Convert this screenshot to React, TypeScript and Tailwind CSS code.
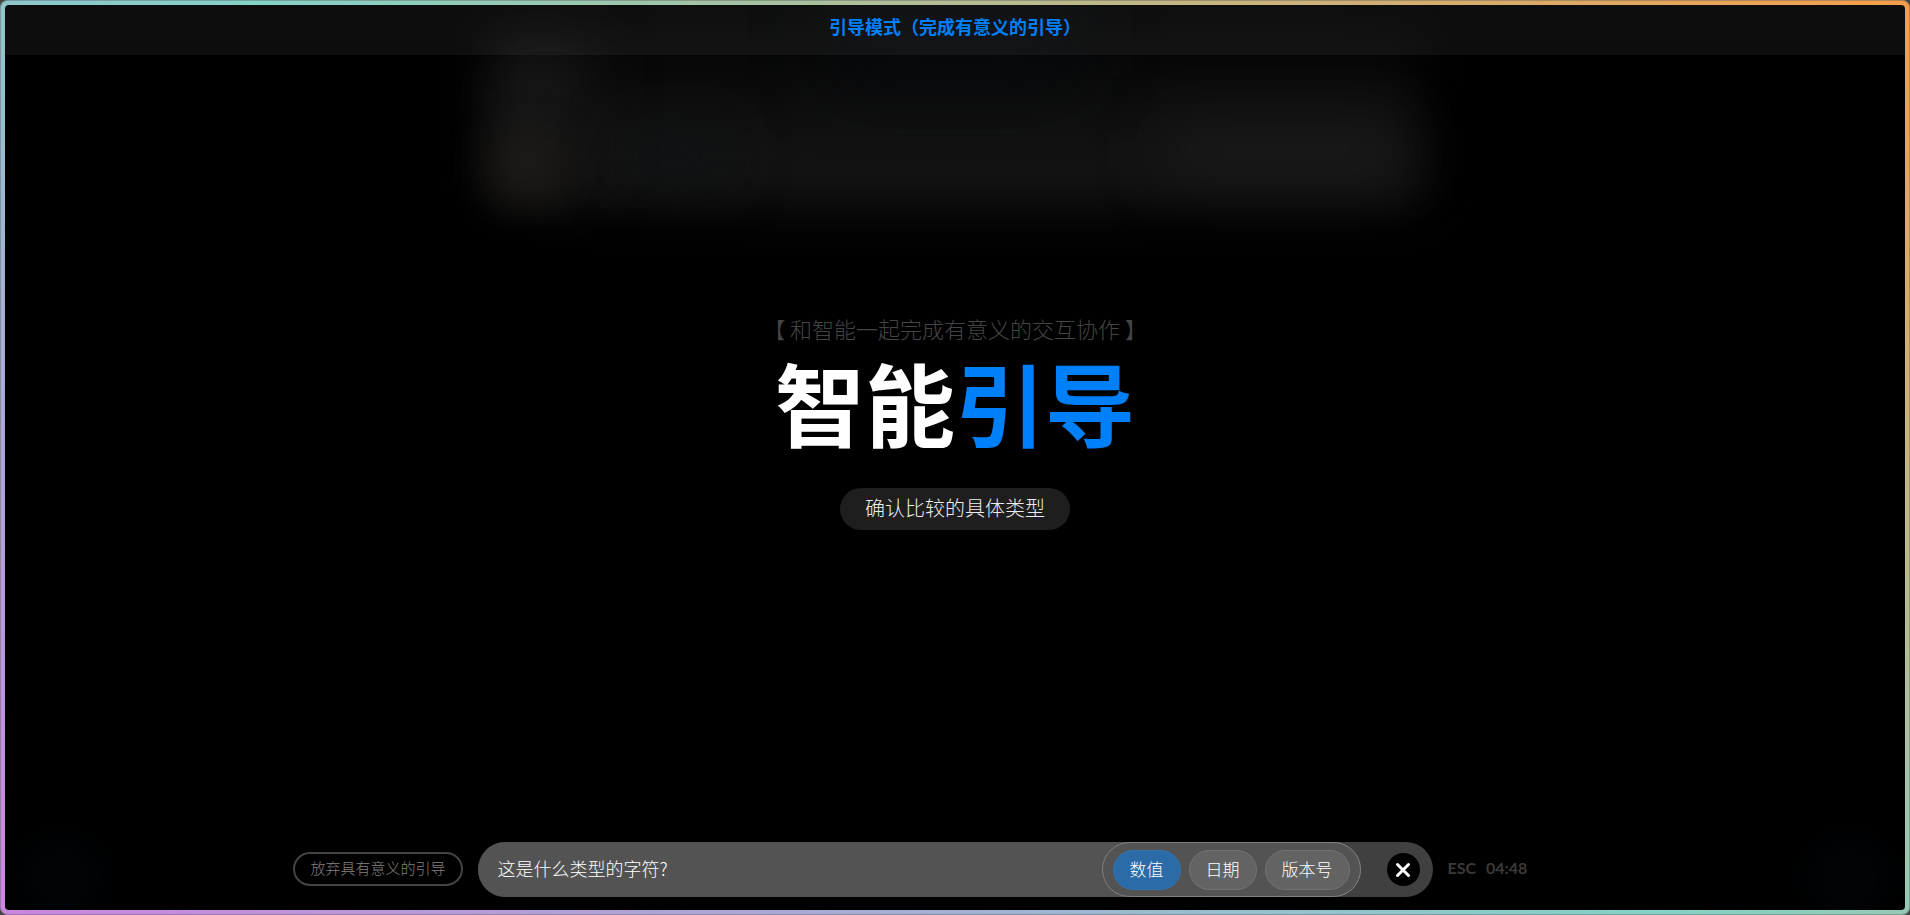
import type { ReactNode } from "react";

const options = ["数值", "日期", "版本号"];

function Glow({ children }: { children: ReactNode }) {
  return (
    <div aria-hidden="true" className="pointer-events-none absolute inset-0 overflow-hidden">
      {children}
    </div>
  );
}

export default function App() {
  return (
    <div className="h-screen bg-[#444] font-['Noto_Sans_CJK_SC',sans-serif]">
      <div className="h-full rounded-lg bg-[linear-gradient(33deg,#cc85e0_0%,#84d2c8_50%,#f59e4b_100%)] p-[5px] shadow-[inset_0_0_0_1px_rgba(90,90,90,0.4)]">
        <div className="relative flex h-full flex-col overflow-hidden rounded-[4px] bg-black">
          <Glow>
            <div className="absolute -top-5 left-1/2 h-[220px] w-[930px] -translate-x-1/2 bg-[linear-gradient(180deg,#000_10%,#0b0b0b_45%,#151515_85%)] blur-[26px]" />
            <div className="absolute top-10 left-[495px] h-[140px] w-[90px] bg-[linear-gradient(90deg,#1c1c1c,#121212)] blur-[30px]" />
            <div className="absolute top-[145px] left-[495px] h-[36px] w-[50px] bg-[#262118] blur-[24px]" />
            <div className="absolute top-[130px] left-[620px] h-[40px] w-[100px] bg-[#0f1214] blur-[30px]" />
            <div className="absolute top-[120px] left-[1160px] h-[50px] w-[240px] bg-[#1a1a1a] blur-[30px]" />
            <div className="absolute -top-2 left-1/2 h-[80px] w-[240px] -translate-x-1/2 bg-[#070a0d] blur-[36px]" />
            <div className="absolute -bottom-2 left-4 size-20 rounded-full bg-[#010306] blur-[12px]" />
            <div className="absolute right-4 -bottom-2 size-20 rounded-full bg-[#010306] blur-[12px]" />
          </Glow>

          <header className="relative flex h-[50px] shrink-0 items-start justify-center bg-white/5 pt-2">
            <p className="text-[18px] leading-[26px] font-bold text-[#0080f8]">引导模式（完成有意义的引导）</p>
          </header>

          <main className="relative flex flex-1 flex-col items-center pt-[257px]">
            <p className="text-[22px] leading-8 font-light text-[#444]">【 和智能一起完成有意义的交互协作 】</p>
            <h1 className="mt-[9px] font-['Lato','Noto_Sans_CJK_SC',sans-serif] text-[90px] leading-[104px] font-bold text-white">
              智能<span className="text-[#0080f8]">引导</span>
            </h1>
            <p className="mt-[31px] rounded-full bg-[#1e1e1e] px-[25px] pt-[5px] pb-[7px] text-[20px] leading-[30px] font-light text-[#eee]">
              确认比较的具体类型
            </p>
          </main>

          <footer className="relative mb-[13px] grid grid-cols-[1fr_minmax(0,955px)_1fr] items-center gap-[15px]">
            <button type="button" className="mb-[2px] h-[34px] justify-self-end rounded-full border-2 border-[#444] px-[15px] pb-[2px] text-[15px] leading-5 font-light text-[#808080]">
              放弃具有意义的引导
            </button>
            <div className="flex h-[55px] items-center rounded-full bg-[#404040] pr-[13px]">
              <div className="flex h-full flex-1 items-center justify-between rounded-full bg-[#535353] pl-5">
                <p className="pb-[3px] text-[18px] leading-[26px] font-light text-white">这是什么类型的字符?</p>
                <div role="group" aria-label="字符类型" className="flex h-full items-center gap-2 rounded-full border border-[#808080] px-[10px]">
                  {options.map((label, i) => (
                    <button
                      key={label}
                      type="button"
                      aria-pressed={i === 0}
                      className={`h-10 rounded-full border px-4 pb-[2px] text-[17px] leading-[26px] font-light text-white ${
                        i === 0 ? "border-[#3372ad] bg-[#2b6ba7]" : "border-[#737373] bg-[#636363]"
                      }`}
                    >
                      {label}
                    </button>
                  ))}
                </div>
              </div>
              <button type="button" aria-label="关闭" className="ml-[26px] flex size-[33px] items-center justify-center rounded-full bg-black">
                <svg viewBox="0 0 16 16" className="size-4" fill="none" stroke="#fff" strokeWidth="3" strokeLinecap="round">
                  <path d="M2.5 2.5 13.5 13.5M13.5 2.5 2.5 13.5" />
                </svg>
              </button>
            </div>
            <p className="flex gap-[10px] pb-[3px] font-['Lato',sans-serif] text-[16px] leading-6 font-bold text-[#3a3a3a]">
              <span>ESC</span>
              <time>04:48</time>
            </p>
          </footer>
        </div>
      </div>
    </div>
  );
}
